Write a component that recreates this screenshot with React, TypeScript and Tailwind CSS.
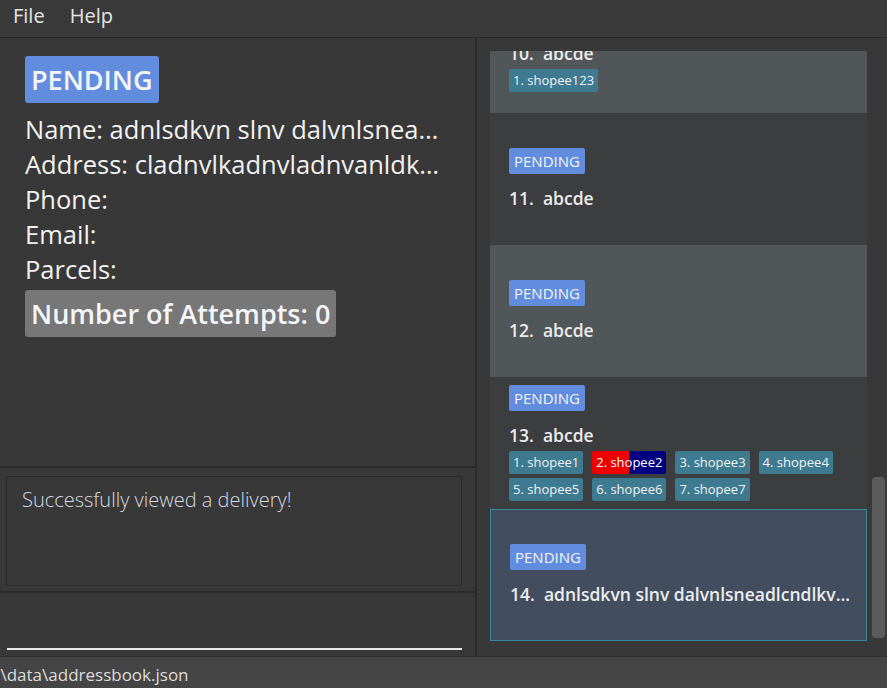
import React from 'react';

const font = "font-['Open_Sans','Noto_Sans',sans-serif]";

type Cell = {
  index: number;
  name: string;
  tags: string[];
  showStatus: boolean;
  tone: 'even' | 'odd' | 'selected';
};

const cells: Cell[] = [
  { index: 10, name: 'abcde', tags: ['1. shopee123'], showStatus: true, tone: 'odd' },
  { index: 11, name: 'abcde', tags: [], showStatus: true, tone: 'even' },
  { index: 12, name: 'abcde', tags: [], showStatus: true, tone: 'odd' },
  {
    index: 13,
    name: 'abcde',
    tags: ['1. shopee1', '2. shopee2', '3. shopee3', '4. shopee4', '5. shopee5', '6. shopee6', '7. shopee7'],
    showStatus: true,
    tone: 'even',
  },
  {
    index: 14,
    name: 'adnlsdkvn slnv dalvnlsneadlcndlkvnlaksdnv',
    tags: [],
    showStatus: true,
    tone: 'selected',
  },
];

function Tag({ label }: { label: string }) {
  // the second parcel is drawn half red, half navy
  if (label.startsWith('2.')) {
    return (
      <span className="rounded-[2px] bg-[linear-gradient(to_right,#ee0000_50%,#000080_50%)] px-[4px] text-[13px] leading-[23px] text-white">
        {label}
      </span>
    );
  }
  return (
    <span className="rounded-[2px] bg-[#3e7b91] px-[4px] text-[13px] leading-[23px] text-[#f2f2f2]">
      {label}
    </span>
  );
}

function DeliveryCell({ cell }: { cell: Cell }) {
  const tone =
    cell.tone === 'selected'
      ? 'bg-[#424d5f] border border-[#3c8499]'
      : cell.tone === 'odd'
        ? 'bg-[#515658]'
        : 'bg-[#3c3d3f]';
  return (
    <div className={`flex h-[132px] flex-col justify-center pl-[19px] pr-[16px] ${tone}`}>
      {cell.showStatus && (
        <span className="w-fit rounded-[2px] bg-[#628ddf] px-[5px] text-[15px] leading-[26px] text-[#f4f4f4]">
          PENDING
        </span>
      )}
      <div className="mt-[11px] truncate whitespace-pre text-[17.5px] font-semibold leading-[26px] text-[#ececec]">
        {cell.index}.  {cell.name}
      </div>
      {cell.tags.length > 0 && (
        <div className="mt-[3px] flex flex-wrap gap-x-[9px] gap-y-[4px]">
          {cell.tags.map((t) => (
            <Tag key={t} label={t} />
          ))}
        </div>
      )}
    </div>
  );
}

export default function App() {
  return (
    <div className={`flex h-[688px] w-[887px] flex-col overflow-hidden bg-[#383838] ${font}`}>
      <div className="flex h-[38px] shrink-0 items-start gap-[25px] border-b border-[#2b2b2b] bg-[#3a3a3a] pl-[13px] pt-[2px] text-[20px] leading-[28px] text-[#e6e6e6]">
        <span>File</span>
        <span>Help</span>
      </div>

      <div className="flex min-h-0 flex-1">
        <div className="flex w-[475px] shrink-0 flex-col">
          <div className="h-[428px] shrink-0 pl-[25px] pt-[18px] text-[#f2f2f2]">
            <span className="inline-block rounded-[3px] bg-[#628ddf] px-[6px] text-[27px] font-semibold leading-[47px] text-[#f4f4f4]">
              PENDING
            </span>
            <div className="mt-[9px] w-[422px] text-[25.5px] leading-[35px]">
              <div className="truncate">Name: adnlsdkvn slnv dalvnlsneadlcndlkvnlaksdnv</div>
              <div className="truncate">Address: cladnvlkadnvladnvanldkvnaldknvlakdnvlkandvlk</div>
              <div>Phone:</div>
              <div>Email:</div>
              <div>Parcels:</div>
            </div>
            <span className="mt-[3px] inline-block rounded-[3px] bg-[#777777] px-[6px] text-[27px] font-semibold leading-[47px] text-[#f4f6fa]">
              Number of Attempts: 0
            </span>
          </div>
          <div className="h-[2px] shrink-0 bg-[#2a2a2a]" />
          <div className="h-[123px] shrink-0 pl-[6px] pr-[13px] pt-[8px]">
            <div className="h-[110px] border border-[#2a2a2a] px-[15px] pt-[8px] text-[20px] font-light text-[#d6dbe0]">
              Successfully viewed a delivery!
            </div>
          </div>
          <div className="h-[2px] shrink-0 bg-[#2a2a2a]" />
          <div className="flex flex-1 flex-col justify-end pb-[6px] pl-[7px] pr-[13px]">
            <div className="h-[2px] bg-[#e8e8e8]" />
          </div>
        </div>

        <div className="w-[2px] shrink-0 bg-[#2a2a2a]" />

        <div className="relative flex-1 pl-[13px] pt-[13px]">
          <div className="h-[591px] w-[377px] overflow-hidden">
            <div className="-mt-[70px]">
              {cells.map((c) => (
                <DeliveryCell key={c.index} cell={c} />
              ))}
            </div>
          </div>
          {/* scrollbar thumb */}
          <div className="absolute left-[395px] top-[439px] h-[161px] w-[13px] rounded-[4px] bg-[#5b5b5b]" />
        </div>
      </div>

      <div className="flex h-[32px] shrink-0 items-start border-t border-[#2f2f2f] bg-[#454545] pt-[6px] text-[17px] leading-[24px] text-[#dcdcdc]">
        <span className="-ml-[4px]">.\data\addressbook.json</span>
      </div>
    </div>
  );
}
